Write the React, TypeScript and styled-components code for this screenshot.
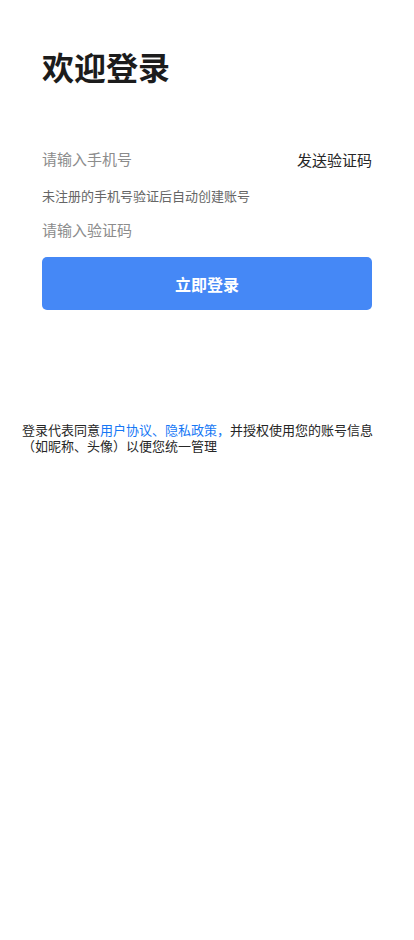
import React, { useState } from 'react';
import styled, { createGlobalStyle } from 'styled-components';

const GlobalStyle = createGlobalStyle`
    html, body {
        margin: 0;
        padding: 0;
        background: #fff;
    }
    body {
        font-family: "Noto Sans CJK SC", "Noto Sans", sans-serif;
        -webkit-font-smoothing: antialiased;
    }
    * {
        box-sizing: border-box;
    }
`;

const App = () => {
    const [phone, setPhone] = useState('');
    const [code, setCode] = useState('');

    return (
        <Page>
            <GlobalStyle />
            <Main>
                <Title>欢迎登录</Title>

                <Form>
                    <InputRow>
                        <Field
                            type="tel"
                            placeholder="请输入手机号"
                            value={phone}
                            onChange={(e) => setPhone(e.target.value)}
                        />
                        <SendCode type="button">发送验证码</SendCode>
                    </InputRow>
                    <Hint>未注册的手机号验证后自动创建账号</Hint>
                    <InputRow spaced>
                        <Field
                            type="text"
                            placeholder="请输入验证码"
                            value={code}
                            onChange={(e) => setCode(e.target.value)}
                        />
                    </InputRow>
                    <SubmitButton type="button">立即登录</SubmitButton>
                </Form>
            </Main>

            <Agreement>
                登录代表同意<Link href="#">用户协议、隐私政策，</Link>并授权使用您的账号信息（如昵称、头像）以便您统一管理
            </Agreement>
        </Page>
    );
};

export default App;

const Page = styled.div`
    min-height: 940px;
    background: #fff;
    display: flex;
    flex-direction: column;
`;
const Main = styled.div`
    padding: 44px 42px 0;
`;
const Title = styled.h1`
    margin: 0;
    font-size: 32px;
    line-height: 44px;
    font-weight: 700;
    color: #1c1c1c;
`;
const Form = styled.div`
    margin-top: 48px;
    display: flex;
    flex-direction: column;
`;
const InputRow = styled.div<{ spaced?: boolean }>`
    display: flex;
    align-items: center;
    justify-content: space-between;
    height: 44px;
    margin-top: ${({ spaced }) => (spaced ? '2px' : '0')};
`;
const Field = styled.input`
    flex: 1;
    min-width: 0;
    border: none;
    outline: none;
    padding: 0;
    background: transparent;
    font-family: inherit;
    font-size: 15px;
    color: #333;
    &::placeholder {
        color: #8c8c8c;
    }
`;
const SendCode = styled.button`
    border: none;
    background: none;
    padding: 0;
    margin-top: 3px;
    font-family: inherit;
    font-size: 15px;
    color: #262626;
    cursor: pointer;
`;
const Hint = styled.p`
    margin: 7px 0 0;
    font-size: 13px;
    line-height: 18px;
    color: #666;
`;
const SubmitButton = styled.button`
    margin-top: 6px;
    height: 53px;
    border: none;
    border-radius: 5px;
    background: #4588f6;
    color: #fff;
    font-family: inherit;
    font-size: 16px;
    font-weight: 700;
    cursor: pointer;
`;
const Agreement = styled.p`
    margin: 112px 0 0;
    padding: 0 22px;
    font-size: 13px;
    line-height: 16px;
    color: #262626;
`;
const Link = styled.a`
    color: #1677f5;
    text-decoration: none;
`;
